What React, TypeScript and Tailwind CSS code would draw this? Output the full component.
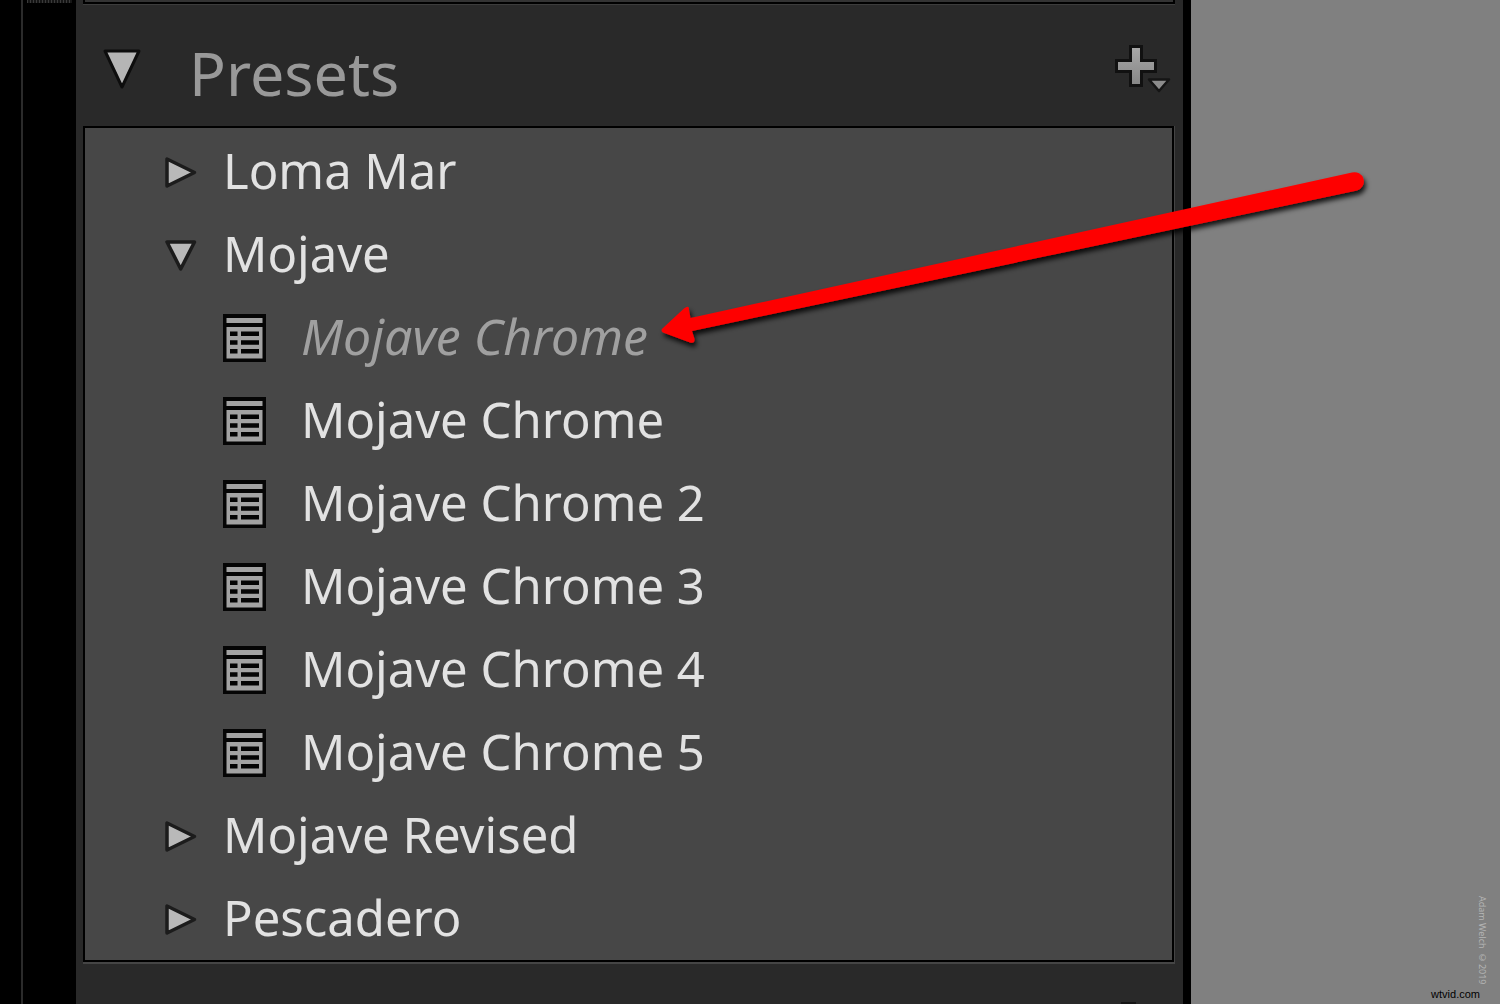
import React from 'react';

interface Preset {
  name: string;
  preview?: boolean;
}

interface PresetGroup {
  name: string;
  open?: boolean;
  presets?: Preset[];
}

const groups: PresetGroup[] = [
  { name: 'Loma Mar' },
  {
    name: 'Mojave',
    open: true,
    presets: [
      { name: 'Mojave Chrome', preview: true },
      { name: 'Mojave Chrome' },
      { name: 'Mojave Chrome 2' },
      { name: 'Mojave Chrome 3' },
      { name: 'Mojave Chrome 4' },
      { name: 'Mojave Chrome 5' },
    ],
  },
  { name: 'Mojave Revised' },
  { name: 'Pescadero' },
];

function Triangle({ open }: { open?: boolean }) {
  return (
    <svg width="32" height="36" viewBox="0 0 32 36" className="shrink-0" aria-hidden="true">
      <path
        d={open ? 'M2 5H29.500L15.700 32Z' : 'M2 5V32L29.500 18.500Z'}
        fill="#b9b9b9"
        stroke="#1c1c1c"
        strokeWidth="3.500"
        strokeLinejoin="round"
      />
    </svg>
  );
}

function PresetIcon() {
  return (
    <svg width="43" height="48" viewBox="0 0 43 48" className="shrink-0" aria-hidden="true">
      <path d="M0 0H43V48H0Z" fill="#050505" />
      <path d="M3.500 4H39.500V9H3.500ZM3.500 13H39.500V44.500H3.500Z" fill="#a3a3a3" />
      <path
        d="M7 17.500H14.500V22H7ZM18 17.500H36V22H18ZM7 26.200H14.500V30.700H7ZM18 26.200H36V30.700H18ZM7 35H14.500V39.500H7ZM18 35H36V39.500H18Z"
        fill="#050505"
      />
    </svg>
  );
}

function AddIcon() {
  return (
    <svg width="56" height="48" viewBox="0 0 56 48" aria-hidden="true">
      <defs>
        <linearGradient id="plus" x1="0" y1="0" x2="0" y2="1">
          <stop offset="0" stopColor="#a9a9a9" />
          <stop offset="1" stopColor="#858585" />
        </linearGradient>
      </defs>
      <path
        d="M15.500 1.500H26.500V15.500H40.500V26.500H26.500V40.500H15.500V26.500H1.500V15.500H15.500Z"
        fill="url(#plus)"
        stroke="#111111"
        strokeWidth="3"
      />
      <path d="M34 34.500H54L44 46Z" fill="#8c8c8c" stroke="#151515" strokeWidth="2.500" strokeLinejoin="round" />
    </svg>
  );
}

function Arrow() {
  return (
    <svg
      width="720"
      height="190"
      viewBox="0 0 720 190"
      className="pointer-events-none absolute top-[165px] right-[125px]"
      aria-hidden="true"
    >
      <defs>
        <filter id="shadow" x="-5%" y="-10%" width="110%" height="125%">
          <feDropShadow dx="2" dy="4" stdDeviation="2.500" floodColor="#000" floodOpacity="0.85" />
        </filter>
      </defs>
      <path
        d="M8 163L29 143.500Q34.500 139.500 34 145L35.500 153L697 7.500A9 9 0 0 1 702 25.500L37 166L39.500 174Q40 179 35 177.500L8 167.500Q5 165 8 163Z"
        fill="#fe0000"
        filter="url(#shadow)"
      />
    </svg>
  );
}

function PresetRow({ name, preview }: Preset) {
  return (
    <li>
      <button type="button" className="flex h-[83px] w-full items-center gap-[35px] pl-[138px] text-left">
        <PresetIcon />
        <span className={preview ? 'pb-1 text-[50px] text-[#a0a0a0] italic' : 'pb-1'}>{name}</span>
      </button>
    </li>
  );
}

function GroupRow({ name, open, presets }: PresetGroup) {
  return (
    <li>
      <button
        type="button"
        aria-expanded={!!open}
        className="flex h-[83px] w-full items-center gap-[26px] pl-20 text-left"
      >
        <Triangle open={open} />
        <span className="pb-1">{name}</span>
      </button>
      {open && presets && (
        <ul>
          {presets.map((preset, i) => (
            <PresetRow key={i} {...preset} />
          ))}
        </ul>
      )}
    </li>
  );
}

export default function App() {
  return (
    <div className="relative flex min-h-screen overflow-hidden bg-black font-['Noto_Sans',sans-serif]">
      {/* window edge and panel grip */}
      <div className="w-[23px] shrink-0 border-r-2 border-[#2b2b2b]" />
      <div className="w-[53px] shrink-0 px-1">
        <div className="h-[3px] bg-[repeating-linear-gradient(90deg,#3a3a3a_0_1px,#151515_1px_3px)]" />
      </div>

      <main className="flex min-w-0 flex-1 flex-col bg-[#292929] px-[7px]">
        <div className="mr-px h-[5px] border-b border-[#3c3c3c]">
          <div className="h-1 border-x-2 border-b-2 border-black bg-[#333333]" />
        </div>

        <header className="flex h-[121px] items-start justify-between pr-[5px] pl-5">
          <button type="button" aria-expanded="true" className="flex items-start gap-12">
            <svg width="38" height="40" viewBox="0 0 38 40" className="mt-11" aria-hidden="true">
              <path d="M2 2H36L19 38Z" fill="#b5b5b5" stroke="#0d0d0d" strokeWidth="3" strokeLinejoin="round" />
            </svg>
            <h1 className="pt-6 text-[61px] leading-[88px] text-[#999999]">Presets</h1>
          </button>
          <button type="button" aria-label="Add preset" className="mt-10">
            <AddIcon />
          </button>
        </header>

        <section className="mr-px border-r border-b-2 border-[#454545]">
          <ul className="border-2 border-black bg-[#474747] pt-0.5 text-[49px] leading-[68px] text-[#e2e2e2] [text-shadow:2px_2px_2px_rgba(0,0,0,0.35)]">
            {groups.map((group) => (
              <GroupRow key={group.name} {...group} />
            ))}
          </ul>
        </section>

        <footer className="flex flex-1 items-end justify-end pr-10">
          <div className="h-0.5 w-[15px] bg-[#151515]" />
        </footer>
      </main>

      <aside className="flex w-[317px] shrink-0 flex-col items-end justify-end border-l-8 border-black bg-[#808080] pb-0.5">
        <p className="mr-2.5 text-[9px] leading-4 text-[#b4b4b4] [writing-mode:vertical-rl]">Adam Welch ©2019</p>
        <p className="mt-0.5 mr-5 font-['Liberation_Sans',sans-serif] text-[11px] leading-4 text-black">wtvid.com</p>
      </aside>

      <Arrow />
    </div>
  );
}
